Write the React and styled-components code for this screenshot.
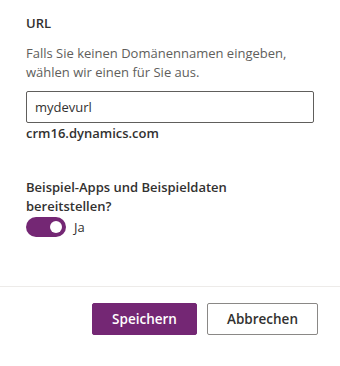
import React from 'react'
import styled, { createGlobalStyle } from 'styled-components'

const GlobalStyle = createGlobalStyle`
  body {
    margin: 0;
    background: #fff;
    font-family: "Open Sans", "Noto Sans", sans-serif;
    color: #323130;
  }
`

const Panel = styled.div`
  width: 340px;
  height: 366px;
  display: flex;
  flex-direction: column;
  background: #fff;
`

const Body = styled.div`
  padding: 13px 26px 0 26px;
  display: flex;
  flex-direction: column;
`

const Label = styled.div`
  font-size: 13px;
  font-weight: 600;
  line-height: 20px;
  color: #323130;
`

const Description = styled.div`
  font-size: 13px;
  line-height: 19px;
  color: #605e5c;
  margin-top: 11px;
`

const Input = styled.input`
  box-sizing: border-box;
  width: 288px;
  height: 32px;
  margin-top: 9px;
  padding: 0 8px;
  border: 1px solid #605e5c;
  border-radius: 2px;
  font-family: inherit;
  font-size: 13px;
  color: #323130;
  outline: none;
`

const Domain = styled.div`
  font-size: 13px;
  font-weight: 600;
  line-height: 20px;
  margin-top: 0;
`

const Question = styled(Label)`
  margin-top: 35px;
  line-height: 19px;
`

const ToggleRow = styled.div`
  display: flex;
  align-items: center;
  gap: 8px;
  margin-top: 1px;
`

const Track = styled.div`
  width: 40px;
  height: 20px;
  border-radius: 10px;
  background: ${({ on }) => (on ? '#742774' : '#fff')};
  display: flex;
  align-items: center;
  justify-content: ${({ on }) => (on ? 'flex-end' : 'flex-start')};
  padding: 0 4px;
  box-sizing: border-box;
`

const Knob = styled.div`
  width: 12px;
  height: 12px;
  border-radius: 50%;
  background: #fff;
`

const ToggleText = styled.span`
  font-size: 13px;
  line-height: 20px;
`

const Footer = styled.div`
  margin-top: auto;
  border-top: 1px solid #edebe9;
  height: 80px;
  box-sizing: border-box;
  padding: 16px 22px 0 0;
  display: flex;
  justify-content: flex-end;
  align-items: flex-start;
  gap: 10px;
`

const Button = styled.button`
  height: 32px;
  min-width: ${({ w }) => w}px;
  box-sizing: border-box;
  border-radius: 2px;
  font-family: inherit;
  font-size: 13.5px;
  font-weight: 600;
  border: 1px solid ${({ primary }) => (primary ? '#742774' : '#8a8886')};
  background: ${({ primary }) => (primary ? '#742774' : '#fff')};
  color: ${({ primary }) => (primary ? '#fff' : '#323130')};
  padding: 0 16px;
`

const App = () => {
  return (
    <Panel>
      <GlobalStyle />
      <Body>
        <Label>URL</Label>
        <Description>
          Falls Sie keinen Domänennamen eingeben, wählen wir einen für Sie aus.
        </Description>
        <Input defaultValue="mydevurl" />
        <Domain>crm16.dynamics.com</Domain>
        <Question>Beispiel-Apps und Beispieldaten bereitstellen?</Question>
        <ToggleRow>
          <Track on>
            <Knob />
          </Track>
          <ToggleText>Ja</ToggleText>
        </ToggleRow>
      </Body>
      <Footer>
        <Button primary w={105}>Speichern</Button>
        <Button w={111}>Abbrechen</Button>
      </Footer>
    </Panel>
  )
}

export default App
